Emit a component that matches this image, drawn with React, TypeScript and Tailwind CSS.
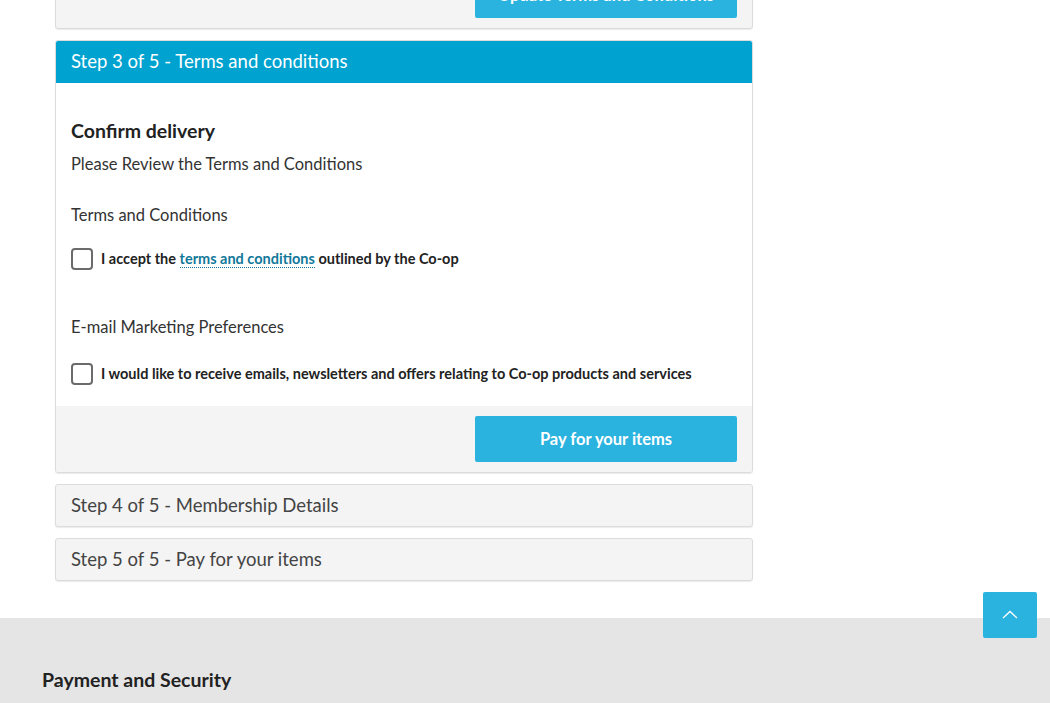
import React from 'react';

const font = { fontFamily: 'Lato, "Open Sans", sans-serif' };

function Checkbox() {
  return <span className="mt-[1px] w-[22px] h-[22px] shrink-0 rounded-[4px] border-2 border-[#6b6b6b] bg-white" />;
}

function StepRow({ label }: { label: string }) {
  return (
    <div className="h-[43px] flex items-center px-[15px] bg-[#f4f4f4] border border-[#dcdcdc] rounded-[3px] shadow-[0_1px_1px_rgba(0,0,0,0.08)]">
      <span className="text-[18.5px] text-[#444]">{label}</span>
    </div>
  );
}

export default function App() {
  return (
    <div className="h-[703px] bg-white text-[#222] overflow-hidden" style={font}>
      <div className="w-[698px] ml-[55px] -mt-[38px] flex flex-col gap-[11px]">
        {/* previous step footer, cut off at the top */}
        <div className="bg-[#f4f4f4] border border-[#dcdcdc] rounded-[3px] shadow-[0_1px_1px_rgba(0,0,0,0.08)] pt-[10px] pb-[10px] pr-[15px] flex justify-end">
          <button className="w-[262px] h-[45px] rounded-[2px] bg-[#2bb3e0] text-white font-bold text-[16.5px]">
            Update Terms and Conditions
          </button>
        </div>

        {/* step 3 */}
        <div className="border border-[#dcdcdc] rounded-[3px] overflow-hidden shadow-[0_1px_1px_rgba(0,0,0,0.08)]">
          <div className="h-[42px] bg-[#00a2cf] flex items-center px-[15px]">
            <span className="text-white text-[18.5px]">Step 3 of 5 - Terms and conditions</span>
          </div>
          <div className="bg-white px-[15px] pt-[36px] pb-[21px]">
            <h2 className="text-[19.5px] font-bold leading-[24px] text-[#222]">Confirm delivery</h2>
            <p className="mt-[9px] text-[16.5px] leading-[24px] text-[#333]">Please Review the Terms and Conditions</p>
            <p className="mt-[27px] text-[16.5px] leading-[24px] text-[#333]">Terms and Conditions</p>
            <label className="mt-[20px] flex items-center gap-2 text-[14.5px] font-bold text-[#222]">
              <Checkbox />
              <span>
                I accept the{' '}
                <a className="text-[#12789a] border-b border-dotted border-[#12789a]">terms and conditions</a>{' '}
                outlined by the Co-op
              </span>
            </label>
            <p className="mt-[45px] text-[16.5px] leading-[24px] text-[#333]">E-mail Marketing Preferences</p>
            <label className="mt-[23px] flex items-center gap-2 text-[14.5px] font-bold text-[#222]">
              <Checkbox />
              <span>I would like to receive emails, newsletters and offers relating to Co-op products and services</span>
            </label>
          </div>
          <div className="bg-[#f4f4f4] pt-[10px] pb-[10px] pr-[15px] flex justify-end">
            <button className="w-[262px] h-[46px] rounded-[2px] bg-[#2bb3e0] text-white font-bold text-[16.5px]">
              Pay for your items
            </button>
          </div>
        </div>

        <StepRow label="Step 4 of 5 - Membership Details" />
        <StepRow label="Step 5 of 5 - Pay for your items" />
      </div>

      <div className="relative mt-[37px] bg-[#e5e5e5] h-[85px] px-[42px] pt-[47px]">
        <button className="absolute right-[13px] -top-[26px] w-[54px] h-[46px] rounded-[2px] bg-[#2bb3e0] flex items-center justify-center">
          <svg width="16" height="10" viewBox="0 0 16 10" fill="none">
            <path d="M1 8 L8 1.5 L15 8" stroke="white" strokeWidth="1.3" />
          </svg>
        </button>
        <h3 className="text-[19.5px] font-bold text-[#222]">Payment and Security</h3>
      </div>
    </div>
  );
}
